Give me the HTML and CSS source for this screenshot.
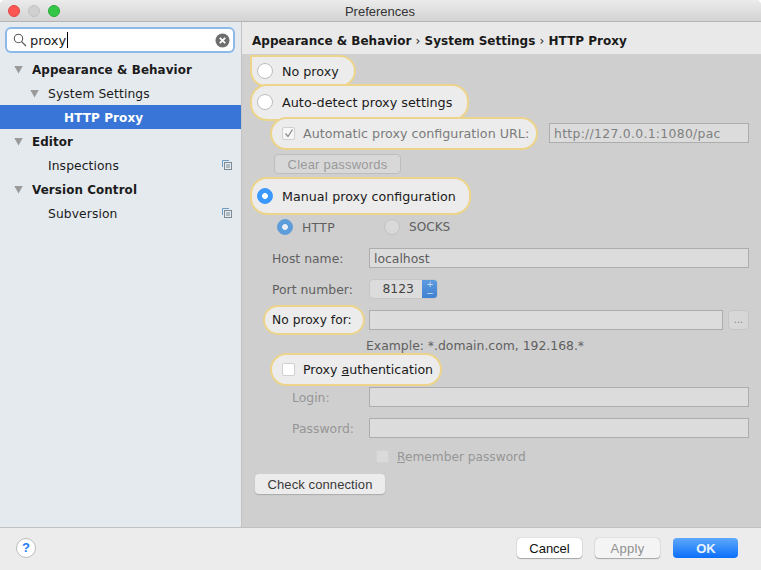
FILE: index.html
```html
<!DOCTYPE html>
<html lang="en">
<head>
<meta charset="utf-8">
<title>Preferences</title>
<link rel="stylesheet" href="styles.css">
</head>
<body>
<div class="window">
  <header class="titlebar">
    <div class="lights"><i class="light red"></i><i class="light grey"></i><i class="light green"></i></div>
    <div class="title">Preferences</div>
  </header>
  <div class="main">
    <aside class="sidebar">
      <div class="search">
        <svg class="search-icon" width="14" height="14" viewBox="0 0 14 14"><circle cx="5.5" cy="5.5" r="4.2" fill="none" stroke="#555" stroke-width="1.1"/><path d="M8.6 8.6L13 13" stroke="#555" stroke-width="1.2"/></svg>
        <span class="search-text">proxy</span><span class="caret"></span>
        <svg class="search-clear" width="15" height="15" viewBox="0 0 15 15"><circle cx="7.5" cy="7.5" r="7" fill="#6e6e6e"/><path d="M4.8 4.8l5.4 5.4M10.2 4.8l-5.4 5.4" stroke="#fff" stroke-width="1.8"/></svg>
      </div>
      <ul class="tree">
        <li class="node l0 bold"><i class="tri"></i>Appearance &amp; Behavior</li>
        <li class="node l1"><i class="tri"></i>System Settings</li>
        <li class="node l2 selected">HTTP Proxy</li>
        <li class="node l0 bold"><i class="tri"></i>Editor</li>
        <li class="node l1 noarrow">Inspections<svg class="copy" width="10" height="10" viewBox="0 0 10 10"><path d="M.5 7V.5H7" fill="none" stroke="#6f9cc4"/><rect x="2.5" y="2.5" width="7" height="7" fill="none" stroke="#7d8a96"/><path d="M4 5h4M4 7h4" stroke="#7d8a96"/></svg></li>
        <li class="node l0 bold"><i class="tri"></i>Version Control</li>
        <li class="node l1 noarrow">Subversion<svg class="copy" width="10" height="10" viewBox="0 0 10 10"><path d="M.5 7V.5H7" fill="none" stroke="#6f9cc4"/><rect x="2.5" y="2.5" width="7" height="7" fill="none" stroke="#7d8a96"/><path d="M4 5h4M4 7h4" stroke="#7d8a96"/></svg></li>
      </ul>
    </aside>
    <section class="content">
      <div class="crumbs">Appearance &amp; Behavior <span class="sep">›</span> System Settings <span class="sep">›</span> HTTP Proxy</div>
      <div class="form">
        <div class="row first">
          <div class="pill pill-noproxy"><i class="radio"></i><span>No proxy</span></div>
        </div>
        <div class="row">
          <div class="pill pill-auto"><i class="radio"></i><span>Auto-detect proxy settings</span></div>
        </div>
        <div class="row">
          <div class="pill pill-url dim">
            <i class="check checked"><svg width="10" height="10" viewBox="0 0 10 10"><path d="M1.5 5.5L4 8.5 8.5 1.5" fill="none" stroke="#8c8c8c" stroke-width="1.3"/></svg></i>
            <span>Automatic proxy configuration URL:</span>
          </div>
          <div class="field field-url">http://127.0.0.1:1080/pac</div>
        </div>
        <div class="row">
          <div class="btn btn-clear">Clear passwords</div>
        </div>
        <div class="row gap-12">
          <div class="pill pill-manual"><i class="radio on"></i><span>Manual proxy configuration</span></div>
        </div>
        <div class="row">
          <div class="proto proto-http"><i class="radio on-dim"></i><span>HTTP</span></div>
          <div class="proto proto-socks"><i class="radio off-dim"></i><span>SOCKS</span></div>
        </div>
        <div class="row">
          <label class="lab lab-host">Host name:</label>
          <div class="field field-full">localhost</div>
        </div>
        <div class="row">
          <label class="lab lab-host">Port number:</label>
          <div class="spinner"><span class="spin-val">8123</span><span class="spin-arrows"><b>+</b><b>−</b></span></div>
        </div>
        <div class="row">
          <div class="pill pill-noproxyfor"><span>No proxy for:</span></div>
          <div class="field field-for"></div>
          <div class="dots">...</div>
        </div>
        <div class="row gap-5 example-row"><span class="example">Example: *.domain.com, 192.168.*</span></div>
        <div class="row gap-4">
          <div class="pill pill-proxyauth"><i class="check"></i><span>Proxy <u>a</u>uthentication</span></div>
        </div>
        <div class="row gap-8">
          <label class="lab lab-login faint">Login:</label>
          <div class="field field-full"></div>
        </div>
        <div class="row">
          <label class="lab lab-login faint">Password:</label>
          <div class="field field-full"></div>
        </div>
        <div class="row gap-8">
          <div class="remember faint"><i class="check faint-check"></i><span><u>R</u>emember password</span></div>
        </div>
        <div class="row gap-8">
          <div class="btn btn-check">Check connection</div>
        </div>
      </div>
    </section>
  </div>
  <footer class="footer">
    <div class="help">?</div>
    <div class="actions">
      <div class="btn action">Cancel</div>
      <div class="btn action disabled">Apply</div>
      <div class="btn action primary">OK</div>
    </div>
  </footer>
</div>
</body>
</html>
```
FILE: styles.css
```css
* { box-sizing: border-box; }
html, body { margin: 0; padding: 0; height: 100%; background: #fff; }
body { font-family: "DejaVu Sans", sans-serif; font-size: 12px; color: #1a1a1a; overflow: hidden; }
.window { width: 761px; height: 570px; display: flex; flex-direction: column; border-radius: 5px 5px 0 0; overflow: hidden; background: #ececec; }
.titlebar { height: 22px; flex: none; position: relative; display: flex; align-items: center; justify-content: center; background: linear-gradient(#ebebeb, #d3d3d3); border-bottom: 1px solid #b4b4b4; padding-top: 2px; }
.title { font-family: "Liberation Sans", sans-serif; font-size: 13px; color: #333; margin-left: -1px; }
.lights { position: absolute; left: 8px; top: 5px; display: flex; gap: 8px; }
.light { width: 12px; height: 12px; border-radius: 50%; display: block; }
.red { background: #fc5753; border: 1px solid #df4744; }
.grey { background: #d0d0d0; border: 1px solid #c0c0c0; }
.green { background: #33c748; border: 1px solid #27aa35; }
.main { flex: 1; display: flex; min-height: 0; }
.sidebar { width: 241px; flex: none; background: #e5eaef; padding-top: 7px; }
.search { margin: 0 7px; width: 226px; height: 22px; display: flex; align-items: center; background: #fff; border-radius: 4px; box-shadow: 0 0 0 2px #8db8ea; padding: 0 3px 0 6px; font-size: 13px; }
.search-icon { flex: none; }
.search-text { margin-left: 3px; }
.caret { width: 1px; height: 16px; background: #000; margin-left: 1px; }
.search-clear { margin-left: auto; }
.tree { list-style: none; margin: 6px 0 0; padding: 0; }
.node { height: 24px; padding-top: 1px; display: flex; align-items: center; position: relative; white-space: nowrap; font-size: 12.3px; letter-spacing: .1px; color: #1b1b1b; }
.bold { font-weight: bold; font-size: 11.9px; }
.l0 { padding-left: 14px; }
.l0 .tri { margin-right: 9px; }
.l1 { padding-left: 30px; }
.l1 .tri { margin-right: 9px; }
.l2 { padding-left: 64px; }
.noarrow { padding-left: 48px; }
.selected { background: #3875d7; color: #fff; font-weight: bold; font-size: 12px; padding-top: 2px; }
.tri { width: 9px; height: 8px; flex: none; clip-path: polygon(0 0, 100% 0, 50% 100%); background: #9a9a9a; display: block; }
.copy { position: absolute; left: 222px; top: 7px; }
.content { flex: 1; min-width: 0; background: #cfcfcf; border-left: 1px solid #c3c3c3; display: flex; flex-direction: column; }
.crumbs { height: 32px; flex: none; padding: 12px 0 0 10px; background: #e9e9e9; font-weight: bold; font-size: 12px; line-height: 14px; color: #1a1a1a; white-space: nowrap; }
.sep { font-weight: normal; }
.form { flex: 1; padding: 0 12px 0 0; display: flex; flex-direction: column; color: #5f5f5f; }
.row { height: 20px; margin-top: 11px; display: flex; align-items: center; position: relative; white-space: nowrap; font-size: 12.4px; }
.row.first { margin-top: 7px; }
.row.gap-12 { margin-top: 12px; }
.row.gap-5 { margin-top: 5px; }
.row.gap-4 { margin-top: 4px; }
.row.gap-8 { margin-top: 8px; }
.pill { flex: none; display: flex; align-items: center; background: #ececec; border: 2px solid #ecd48a; border-radius: 17px; color: #1a1a1a; font-size: 12.7px; }
.pill-noproxy { margin-left: 8px; width: 106px; height: 32px; padding-left: 5px; gap: 9px; border-radius: 0 17px 17px 17px; }
.pill-auto { margin-left: 8px; width: 219px; height: 37px; padding-left: 5px; gap: 9px; font-size: 12.8px; }
.pill-url { margin-left: 28px; width: 268px; height: 33px; padding-left: 10px; gap: 8px; color: #7b7b7b; }
.pill-manual { margin-left: 8px; width: 221px; height: 38px; padding-left: 5px; gap: 9px; }
.pill-noproxyfor { margin-left: 21px; width: 102px; height: 30px; padding-left: 7px; font-size: 12.3px; }
.pill-proxyauth { margin-left: 28px; width: 172px; height: 33px; padding-left: 10px; gap: 8px; font-size: 12.6px; }
.radio { width: 16px; height: 16px; border-radius: 50%; background: #fff; border: 1px solid #bdbdbd; display: block; flex: none; }
.radio.on { background: radial-gradient(circle, #fff 0 2.6px, #3b98fc 3.2px); border-color: #3b98fc; }
.radio.on-dim { background: radial-gradient(circle, #e8eef5 0 2.6px, #5d9cdb 3.2px); border-color: #5d9cdb; }
.radio.off-dim { background: #d9d9d9; border-color: #c2c2c2; }
.check { width: 13px; height: 13px; border-radius: 2px; background: #fff; border: 1px solid #d0d0d0; display: flex; align-items: center; justify-content: center; flex: none; }
.check.checked { background: #f7f7f7; }
.faint-check { background: #dadada; border-color: #d2d2d2; }
.field { height: 20px; background: #dcdcdc; border: 1px solid #adadad; padding: 1px 4px 0; line-height: 18px; color: #5c5c5c; flex: none; }
.field-url { margin-left: 11px; width: 200px; color: #808080; letter-spacing: .3px; }
.field-full { margin-left: auto; width: 380px; }
.field-for { margin-left: 4px; width: 354px; }
.lab { flex: none; margin-left: 30px; }
.lab-login { margin-left: 50px; }
.faint { color: #969696; }
.proto { display: flex; align-items: center; gap: 9px; }
.proto-http { margin-left: 35px; width: 107px; letter-spacing: .3px; }
.proto-socks { font-size: 12.1px; }
.proto i { width: 16px; height: 16px; }
.spinner { position: absolute; left: 127px; top: 0; width: 69px; height: 20px; display: flex; background: #dcdcdc; border-radius: 4px; border: 1px solid #c6c6c6; overflow: hidden; }
.spin-val { flex: 1; text-align: right; padding-right: 8px; line-height: 18px; color: #444; }
.spin-arrows { width: 16px; background: linear-gradient(#5e9ce0, #3e7fd0); color: #cfe0f5; display: flex; flex-direction: column; align-items: center; font-size: 9px; line-height: 9px; margin: -1px -1px -1px 0; padding-top: 1px; }
.spin-arrows b { font-weight: normal; }
.dots { width: 21px; height: 20px; margin-left: 5px; background: #d7d7d7; border: 1px solid #c4c4c4; border-radius: 4px; text-align: center; font-size: 10px; line-height: 18px; color: #8a8a8a; flex: none; }
.example { margin-left: 124px; color: #5f5f5f; }
.remember { display: flex; align-items: center; gap: 8px; margin-left: 134px; font-size: 12.2px; padding-top: 1px; }
.btn { font-family: "Liberation Sans", sans-serif; font-size: 13px; height: 20px; display: flex; align-items: center; justify-content: center; border-radius: 4px; flex: none; }
.btn-clear { margin-left: 32px; width: 127px; background: #d8d8d8; border: 1px solid #bdbdbd; color: #9a9a9a; letter-spacing: .2px; }
.btn-check { margin-left: 13px; width: 130px; background: #ececec; box-shadow: 0 1px 1px #aaa; color: #3a3a3a; letter-spacing: .1px; }
.footer { height: 43px; flex: none; background: #ececec; border-top: 1px solid #c0c0c0; display: flex; align-items: flex-start; padding: 10px 23px 0 16px; }
.help { width: 20px; height: 20px; border-radius: 50%; background: #fff; border: 1px solid #bdbdbd; color: #1d7cf2; font-family: "Liberation Sans", sans-serif; font-weight: bold; font-size: 13px; text-align: center; line-height: 18px; }
.actions { margin-left: auto; display: flex; gap: 13px; }
.action { width: 65px; background: #fff; box-shadow: 0 0 1px 0 #888, 0 1px 1px #aaa; color: #111; }
.action.disabled { background: #f4f4f4; color: #909090; letter-spacing: .3px; }
.action.primary { background: linear-gradient(#5fa9fb, #0b6ffb); color: #eaf3ff; font-weight: bold; box-shadow: none; padding-left: 1px; }
```
